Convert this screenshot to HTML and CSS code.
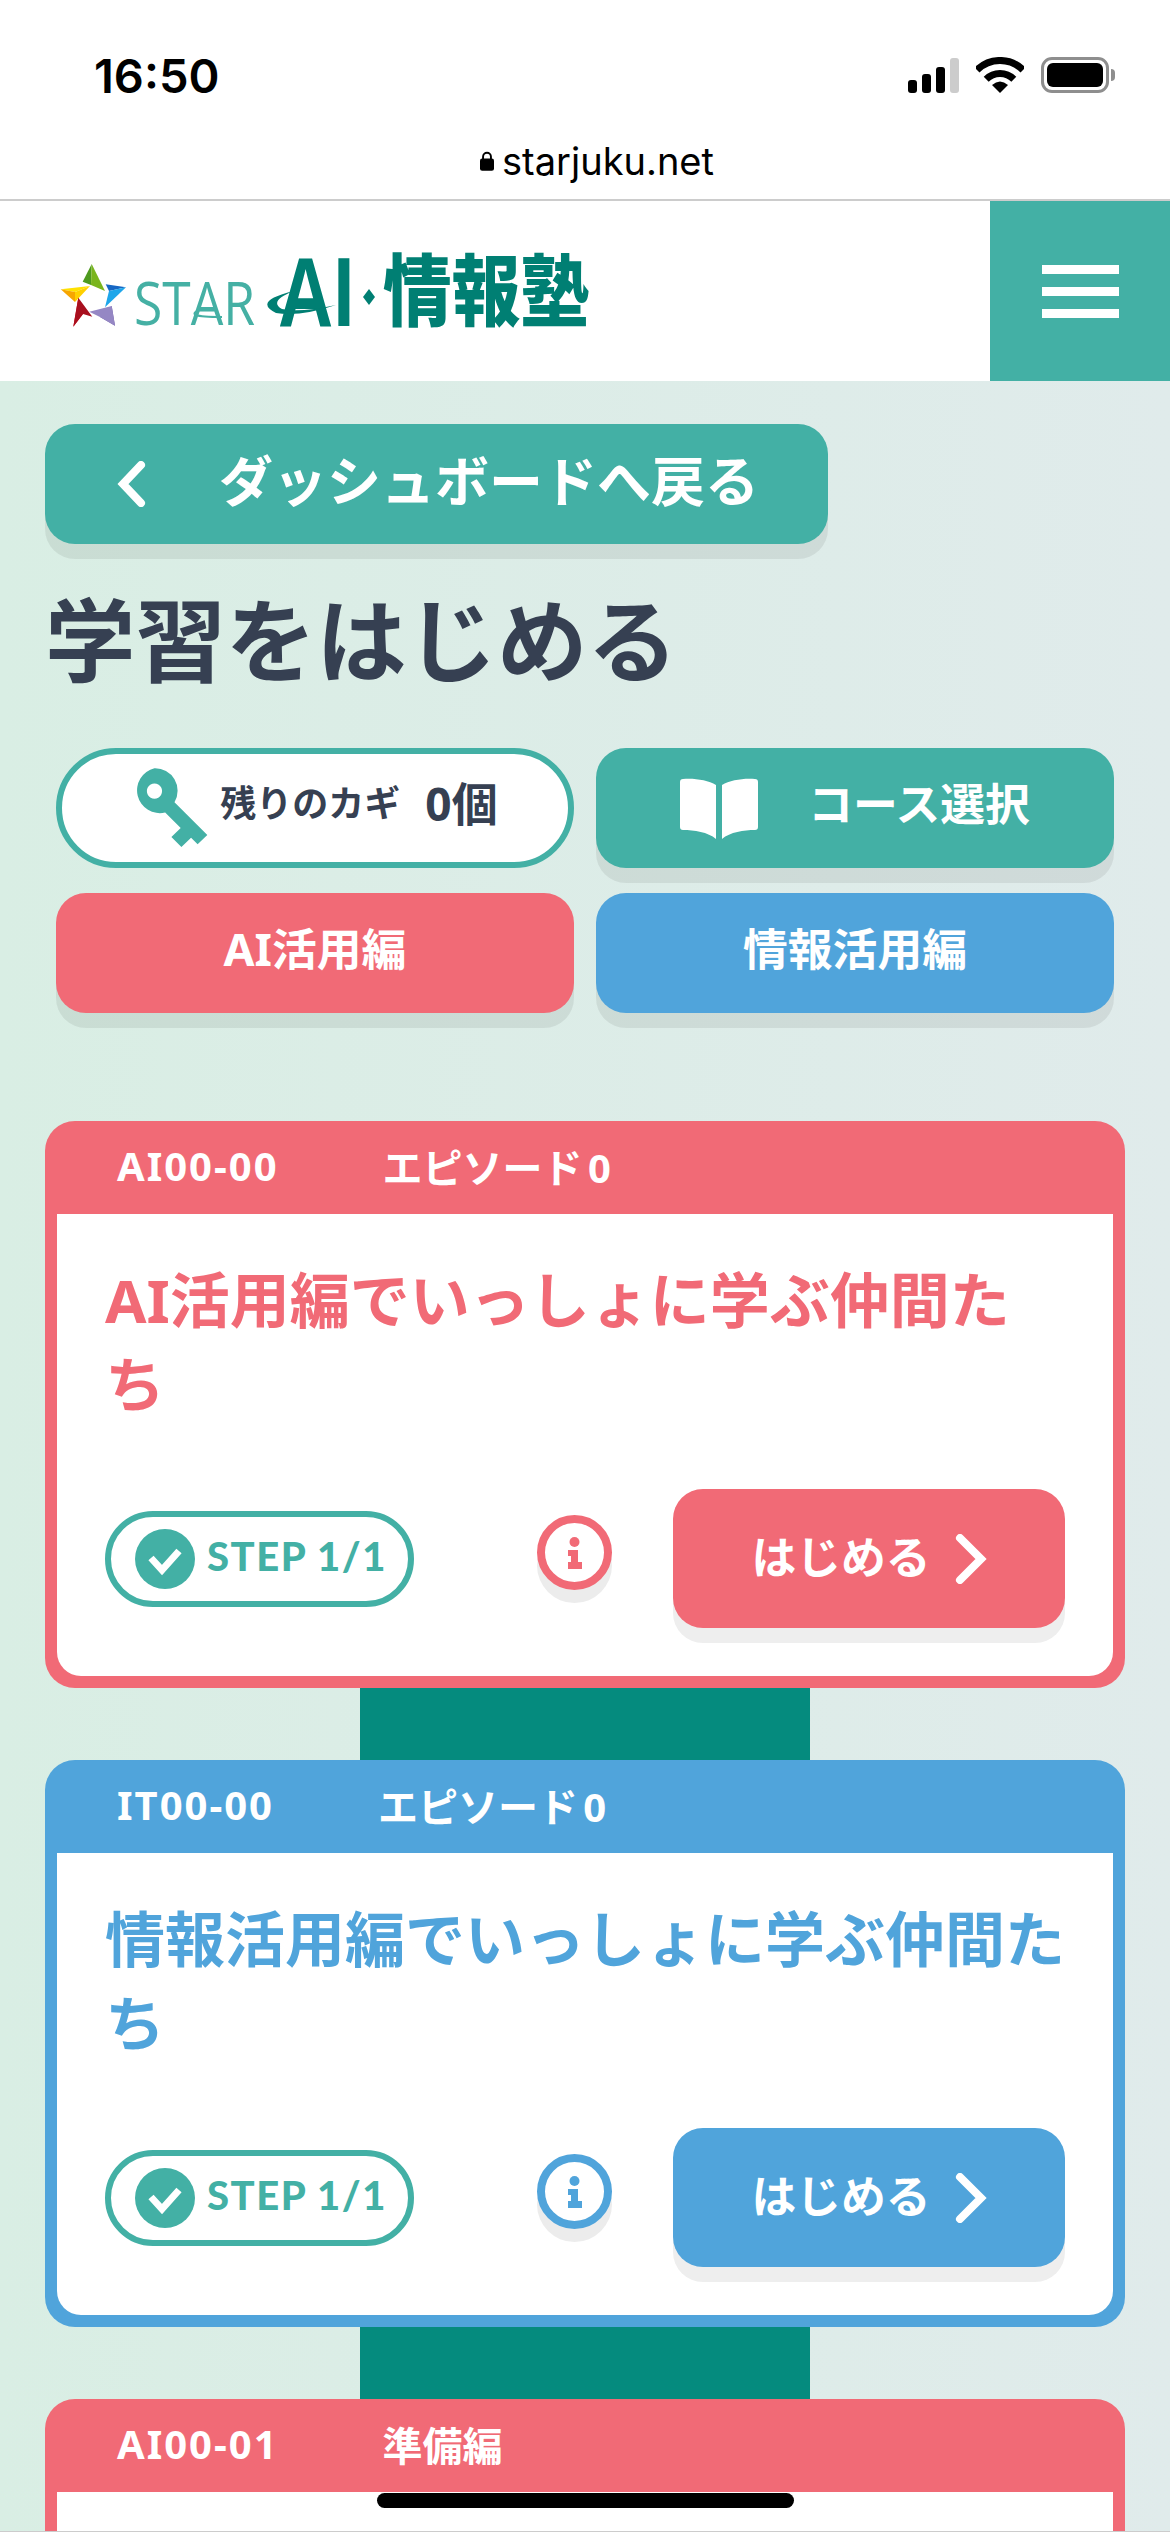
FILE: index.html
```html
<!DOCTYPE html>
<html lang="ja">
<head>
  <meta charset="UTF-8">
  <meta name="viewport" content="width=device-width, initial-scale=1.0">
  <title>学習をはじめる</title>
  <link rel="stylesheet" href="styles.css">
</head>
<body>
<div class="page">
  <div class="status">
    <span class="time">16:50</span>
    <div class="status-icons">
      <div class="signal">
        <span class="bar bar1"></span>
        <span class="bar bar2"></span>
        <span class="bar bar3"></span>
        <span class="bar bar4"></span>
      </div>
      <svg class="wifi" width="48" height="36" viewBox="0 0 48 36">
        <path d="M1 13A32.5 32.5 0 0 1 47 13M10.2 22.2A19.5 19.5 0 0 1 37.8 22.2" fill="none" stroke="#000" stroke-width="7"/>
        <path d="M24 36L16 28Q24 21 32 28Z"/>
      </svg>
      <div class="battery"><span class="battery-fill"></span></div>
      <span class="battery-cap"></span>
    </div>
  </div>
  <div class="url">
    <svg width="14" height="22" viewBox="0 0 16 22">
      <path d="M3.5 9V6a4.5 4.5 0 0 1 9 0v3" fill="none" stroke="#000" stroke-width="2.2"/>
      <rect x="0" y="8" width="16" height="14" rx="2.5"/>
    </svg>
    <span>starjuku.net</span>
  </div>

  <header class="site-header">
    <svg class="logo" width="550" height="120" viewBox="0 -20 550 120">
      <polygon points="41.7,13 32.7,30.7 41,34" fill="#4e9a1e"/>
      <polygon points="41.7,13 41,34 55,40" fill="#7ab51d"/>
      <polygon points="10.7,38.3 40,35 25,41" fill="#ffe100"/>
      <polygon points="10.7,38.3 25,41 25,51" fill="#f7a600"/>
      <polygon points="25,41 40,35 25,51" fill="#ffd000"/>
      <polygon points="76,36.3 55.7,33.3 59,40" fill="#1667c4"/>
      <polygon points="76,36.3 59,40 55,56.3" fill="#1ea6ea"/>
      <polygon points="65,74.7 61.7,55 50,66" fill="#6c5aa6"/>
      <polygon points="65,74.7 50,66 39.3,60.7 61.7,55" fill="#9587c4"/>
      <polygon points="23.3,75.7 28.3,46.7 33,63" fill="#e30d1c"/>
      <polygon points="23.3,75.7 33,63 42.3,65.7 28.3,46.7" fill="#a80f1e"/>
      <text class="logo-star" transform="translate(84 74) scale(.86 1)">STAR</text>
      <path d="M152 58Q130 66 172 66" fill="none" stroke="#45b0a4" stroke-width="2"/>
      <text class="logo-ai" transform="translate(228 75) scale(.78 1)">AI</text>
      <path d="M244 40Q202 50 226 62Q250 66 286 54Q250 62 232 58Q218 50 244 40Z" fill="#007f73"/>
      <polygon points="319,38 325,46 319,54 313,46" fill="#007f73"/>
      <text class="logo-kanji" transform="translate(333 69) scale(.88 1)">情報塾</text>
    </svg>
    <button class="menu-btn">
      <span></span>
      <span></span>
      <span></span>
    </button>
  </header>

  <main>
    <a class="back-btn">
      <svg width="30" height="46" viewBox="0 0 30 46">
        <path d="M25 4L7 23L25 42" fill="none" stroke="#fff" stroke-width="8" stroke-linecap="round"/>
      </svg>
      <span>ダッシュボードへ戻る</span>
    </a>
    <h1>学習をはじめる</h1>

    <div class="btn-grid">
      <div class="btn key-btn">
        <svg width="76" height="80" viewBox="297 122 220 230">
          <path fill-rule="evenodd" fill="#43b0a5" d="M362 122a65 65 0 0 1 58 98l95 95l-28 27l-19-19l-28 27l-29-29l27-26l-45-45a65 65 0 1 1-31-128zM362 166a22 22 0 1 0 .1 0z"/>
        </svg>
        <span class="key-label">残りのカギ</span>
        <span class="key-count">0個</span>
      </div>
      <div class="btn course-btn">
        <svg width="78" height="61" viewBox="0 0 78 61">
          <path fill="#fff" d="M36 7C28 2 14 0 3 1C1 1 0 2 0 4V49C0 51 1 52 3 52C14 52 28 54 36 61Z"/>
          <path fill="#fff" d="M42 7C50 2 64 0 75 1C77 1 78 2 78 4V49C78 51 77 52 75 52C64 52 50 54 42 61Z"/>
        </svg>
        <span>コース選択</span>
      </div>
      <div class="btn red-btn"><span>AI活用編</span></div>
      <div class="btn blue-btn"><span>情報活用編</span></div>
    </div>

    <section class="card card-red">
      <div class="card-head">
        <span class="code">AI00-00</span>
        <span class="episode">エピソード 0</span>
      </div>
      <div class="card-body">
        <h2>AI活用編でいっしょに学ぶ仲間たち</h2>
        <div class="card-foot">
          <div class="step">
            <svg width="60" height="60" viewBox="0 0 60 60">
              <circle cx="30" cy="30" r="30" fill="#43b0a5"/>
              <path d="M16 29L27 41L44 22" fill="none" stroke="#fff" stroke-width="7"/>
            </svg>
            <span>STEP 1/1</span>
          </div>
          <div class="info">
            <svg width="14" height="32" viewBox="0 0 14 32">
              <circle cx="6.5" cy="5" r="5"/>
              <path d="M0 13H10V25H14V32H0V25H3V19H0Z"/>
            </svg>
          </div>
          <a class="start-btn">
            <span>はじめる</span>
            <svg width="32" height="50" viewBox="0 0 32 50">
              <path d="M5 4L26 25L5 46" fill="none" stroke="#fff" stroke-width="8" stroke-linecap="round"/>
            </svg>
          </a>
        </div>
      </div>
    </section>
    <div class="connector"></div>

    <section class="card card-blue">
      <div class="card-head">
        <span class="code">IT00-00</span>
        <span class="episode">エピソード 0</span>
      </div>
      <div class="card-body">
        <h2>情報活用編でいっしょに学ぶ仲間たち</h2>
        <div class="card-foot">
          <div class="step">
            <svg width="60" height="60" viewBox="0 0 60 60">
              <circle cx="30" cy="30" r="30" fill="#43b0a5"/>
              <path d="M16 29L27 41L44 22" fill="none" stroke="#fff" stroke-width="7"/>
            </svg>
            <span>STEP 1/1</span>
          </div>
          <div class="info">
            <svg width="14" height="32" viewBox="0 0 14 32">
              <circle cx="6.5" cy="5" r="5"/>
              <path d="M0 13H10V25H14V32H0V25H3V19H0Z"/>
            </svg>
          </div>
          <a class="start-btn">
            <span>はじめる</span>
            <svg width="32" height="50" viewBox="0 0 32 50">
              <path d="M5 4L26 25L5 46" fill="none" stroke="#fff" stroke-width="8" stroke-linecap="round"/>
            </svg>
          </a>
        </div>
      </div>
    </section>
    <div class="connector"></div>

    <section class="card card-red">
      <div class="card-head">
        <span class="code">AI00-01</span>
        <span class="episode">準備編</span>
      </div>
      <div class="card-body card-body-cut"></div>
    </section>
  </main>

  <div class="home-bar"></div>
  <div class="bottom-line"></div>
</div>
</body>
</html>
```

FILE: styles.css
```css
*{
  box-sizing: border-box;
}
body{
  margin: 0;
  font-family: "Noto Sans", "Noto Sans CJK JP", sans-serif;
}
.page{
  position: relative;
  width: 1170px;
  height: 2532px;
  overflow: hidden;
  background: linear-gradient(90deg, #d9eee4, #e0ebeb);
}

/* phone chrome */
.status{
  display: flex;
  justify-content: space-between;
  align-items: center;
  height: 120px;
  padding: 30px 55px 0 94px;
  background: #fff;
}
.time{
  font-family: Inter, sans-serif;
  font-size: 47px;
  font-weight: 600;
  color: #000;
}
.status-icons{
  display: flex;
  align-items: center;
}
.signal{
  display: flex;
  align-items: flex-end;
  gap: 5px;
  height: 35px;
  margin-right: 17px;
}
.bar{
  width: 9px;
  border-radius: 3px;
  background: #000;
}
.bar1{ height: 13px; }
.bar2{ height: 19px; }
.bar3{ height: 26px; }
.bar4{ height: 35px; background: #ccc; }
.wifi{
  margin-right: 17px;
}
.battery{
  width: 68px;
  height: 36px;
  padding: 3px;
  border: 3px solid #8e8e8e;
  border-radius: 11px;
}
.battery-fill{
  display: block;
  height: 100%;
  border-radius: 6px;
  background: #000;
}
.battery-cap{
  width: 4px;
  height: 12px;
  margin-left: 2px;
  border-radius: 0 4px 4px 0;
  background: #8e8e8e;
}
.url{
  display: flex;
  justify-content: center;
  align-items: center;
  gap: 8px;
  height: 81px;
  padding: 2px 0 0 24px;
  border-bottom: 2px solid #ccc;
  background: #fff;
  font-family: Inter, sans-serif;
  font-size: 38px;
  color: #000;
}

/* site header */
.site-header{
  display: flex;
  justify-content: space-between;
  align-items: center;
  height: 180px;
  padding-left: 50px;
  background: #fff;
}
.logo-star{
  font-family: "Open Sans", sans-serif;
  font-size: 60px;
  fill: #45b0a4;
}
.logo-ai{
  font-family: "Liberation Sans", sans-serif;
  font-size: 98px;
  font-weight: 700;
  fill: #007f73;
}
.logo-kanji{
  font-family: "Noto Sans CJK JP", sans-serif;
  font-size: 78px;
  font-weight: 900;
  fill: #007f73;
}
.menu-btn{
  display: flex;
  flex-direction: column;
  justify-content: center;
  align-items: center;
  gap: 13px;
  width: 180px;
  height: 180px;
  border: 0;
  background: #43b0a5;
}
.menu-btn span{
  width: 77px;
  height: 9px;
  background: #fff;
}

/* top buttons */
main{
  padding: 43px 45px 0;
}
.back-btn{
  display: flex;
  align-items: center;
  gap: 73px;
  width: 783px;
  height: 120px;
  padding-left: 71px;
  border-radius: 30px;
  background: #43b0a5;
  box-shadow: 0 15px 0 rgba(0,0,0,.07);
  font-size: 54px;
  font-weight: 700;
  color: #fff;
}
.back-btn span{
  padding-bottom: 12px;
}
h1{
  margin: 36px 0 48px;
  font-size: 90.4px;
  line-height: 120px;
  font-weight: 700;
  color: #364052;
}
.btn-grid{
  display: grid;
  grid-template-columns: 518px 518px;
  gap: 25px 22px;
  margin-left: 11px;
}
.btn{
  display: flex;
  justify-content: center;
  align-items: center;
  height: 120px;
  border-radius: 30px;
  box-shadow: 0 15px 0 rgba(0,0,0,.07);
  font-size: 44.8px;
  font-weight: 700;
  color: #fff;
}
.btn span{
  padding-bottom: 14px;
}
.key-btn{
  border: 6px solid #43b0a5;
  border-radius: 60px;
  background: #fff;
  box-shadow: none;
  color: #364052;
}
.key-label{
  margin-left: 12px;
  font-size: 36px;
}
.key-count{
  margin-left: 25px;
  font-size: 46px;
}
.course-btn{
  gap: 50px;
  background: #43b0a5;
}
.red-btn{
  background: #f16a76;
}
.blue-btn{
  background: #50a4db;
}

/* lesson cards */
.card{
  padding: 0 12px 12px;
  border-radius: 30px;
}
.card-red{
  --theme: #f16a76;
  background: #f16a76;
}
.card-blue{
  --theme: #50a4db;
  background: #50a4db;
}
.btn-grid + .card{
  margin-top: 108px;
}
.card-head{
  display: flex;
  align-items: center;
  gap: 104px;
  height: 93px;
  padding: 0 0 4px 60px;
  font-size: 40px;
  font-weight: 700;
  color: #fff;
}
.code{
  letter-spacing: 2px;
}
.episode{
  word-spacing: -5px;
}
.card-body{
  padding: 44px 48px 48px;
  border-radius: 0 0 24px 24px;
  background: #fff;
}
.card-body-cut{
  height: 400px;
}
h2{
  margin: 0;
  font-size: 60px;
  line-height: 84px;
  font-weight: 700;
  color: var(--theme);
}
.card-foot{
  display: flex;
  align-items: center;
  margin-top: 63px;
}
.step{
  display: flex;
  align-items: center;
  gap: 12px;
  width: 309px;
  height: 96px;
  padding-left: 24px;
  border: 6px solid #43b0a5;
  border-radius: 48px;
  font-family: Lato, sans-serif;
  font-size: 40px;
  font-weight: 900;
  letter-spacing: 1.5px;
  color: #43b0a5;
}
.step span{
  padding-bottom: 6px;
}
.info{
  display: flex;
  justify-content: center;
  align-items: center;
  width: 75px;
  height: 75px;
  margin: 0 61px 12px auto;
  border: 8px solid var(--theme);
  border-radius: 50%;
  background: #fff;
  box-shadow: 0 13px 0 #ececec;
  fill: var(--theme);
}
.start-btn{
  display: flex;
  justify-content: center;
  align-items: center;
  gap: 24px;
  width: 392px;
  height: 139px;
  border-radius: 30px;
  background: var(--theme);
  box-shadow: 0 15px 0 #eee;
  font-size: 44.8px;
  font-weight: 700;
  color: #fff;
}
.start-btn span{
  padding-bottom: 8px;
}
.connector{
  width: 450px;
  height: 72px;
  margin: 0 auto;
  background: #058b7e;
}

/* overlays */
.home-bar{
  position: absolute;
  left: 377px;
  bottom: 24px;
  width: 417px;
  height: 15px;
  border-radius: 8px;
  background: #000;
}
.bottom-line{
  position: absolute;
  left: 0;
  right: 0;
  bottom: 0;
  height: 1px;
  background: #ccc;
}
```
